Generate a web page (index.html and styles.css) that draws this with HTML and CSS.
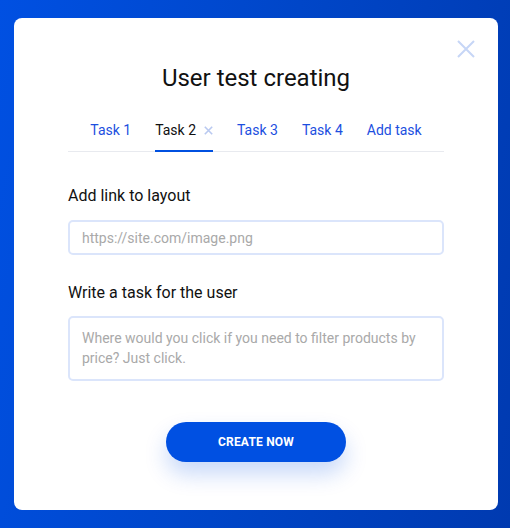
FILE: index.html
```html
<!DOCTYPE html>
<html lang="en">
<head>
<meta charset="utf-8">
<title>User test creating</title>
<link rel="stylesheet" href="styles.css">
</head>
<body>
<div class="modal">
  <button class="close" aria-label="Close">
    <svg width="18" height="18" viewBox="0 0 18 18"><path d="M1 1L17 17M17 1L1 17" stroke="#c6d6f6" stroke-width="2" fill="none"/></svg>
  </button>
  <h1 class="title">User test creating</h1>
  <nav class="tabs">
    <span class="tab">Task 1</span>
    <span class="tab active">Task 2<svg class="tab-x" width="9" height="9" viewBox="0 0 9 9"><path d="M0.8 0.8L8.2 8.2M8.2 0.8L0.8 8.2" stroke="#b9c9f0" stroke-width="1.6" fill="none"/></svg></span>
    <span class="tab">Task 3</span>
    <span class="tab">Task 4</span>
    <span class="tab">Add task</span>
  </nav>
  <label class="label">Add link to layout</label>
  <div class="input">https://site.com/image.png</div>
  <label class="label label-2">Write a task for the user</label>
  <div class="input textarea">Where would you click if you need to filter products by price? Just click.</div>
  <div class="actions">
    <button class="btn">CREATE NOW</button>
  </div>
</div>
</body>
</html>
```

FILE: styles.css
```css
html, body {
  margin: 0;
  height: 100%;
}
body {
  background: linear-gradient(100deg, #0050e2 0%, #0046c8 50%, #003ab0 100%);
  font-family: Roboto, "Liberation Sans", sans-serif;
  padding: 18px 12px 18px 14px;
  box-sizing: border-box;
}
.modal {
  position: relative;
  background: #fff;
  border-radius: 8px;
  height: 492px;
  box-sizing: border-box;
  padding: 46px 54px 0;
  display: flex;
  flex-direction: column;
}
.close {
  position: absolute;
  top: 22px;
  right: 23px;
  width: 18px;
  height: 18px;
  padding: 0;
  border: 0;
  background: none;
  display: block;
}
.close svg { display: block; }
.title {
  margin: 0;
  font-size: 24px;
  font-weight: 400;
  line-height: 28px;
  text-align: center;
  color: #111;
}
.tabs {
  margin-top: 30px;
  display: flex;
  justify-content: center;
  gap: 24px;
  border-bottom: 1px solid #e8eaef;
}
.tab {
  font-size: 14px;
  line-height: 16px;
  color: #1c4fe0;
  padding-bottom: 12px;
  border-bottom: 2px solid transparent;
  margin-bottom: -1px;
  display: flex;
  align-items: center;
}
.tab.active {
  color: #111;
  border-bottom-color: #0050e0;
}
.tab-x {
  display: block;
  margin-left: 8px;
}
.label {
  display: block;
  margin-top: 34px;
  font-size: 16px;
  line-height: 19px;
  color: #111;
}
.label-2 { margin-top: 28px; }
.input {
  margin-top: 15px;
  height: 35px;
  box-sizing: border-box;
  border: 2px solid #dbe5fb;
  border-radius: 5px;
  padding: 1px 12px 0;
  font-size: 14px;
  line-height: 31px;
  color: #a9a9a9;
}
.textarea {
  margin-top: 14px;
  height: 65px;
  padding-top: 10px;
  line-height: 20px;
}
.actions {
  margin-top: 41px;
  display: flex;
  justify-content: center;
}
.btn {
  width: 180px;
  height: 40px;
  border: 0;
  border-radius: 20px;
  background: #0050e2;
  color: #fff;
  font-family: Roboto, "Liberation Sans", sans-serif;
  font-weight: 700;
  font-size: 12px;
  letter-spacing: 0.2px;
  box-shadow: 0 12px 22px rgba(0, 80, 226, 0.22);
}
```
